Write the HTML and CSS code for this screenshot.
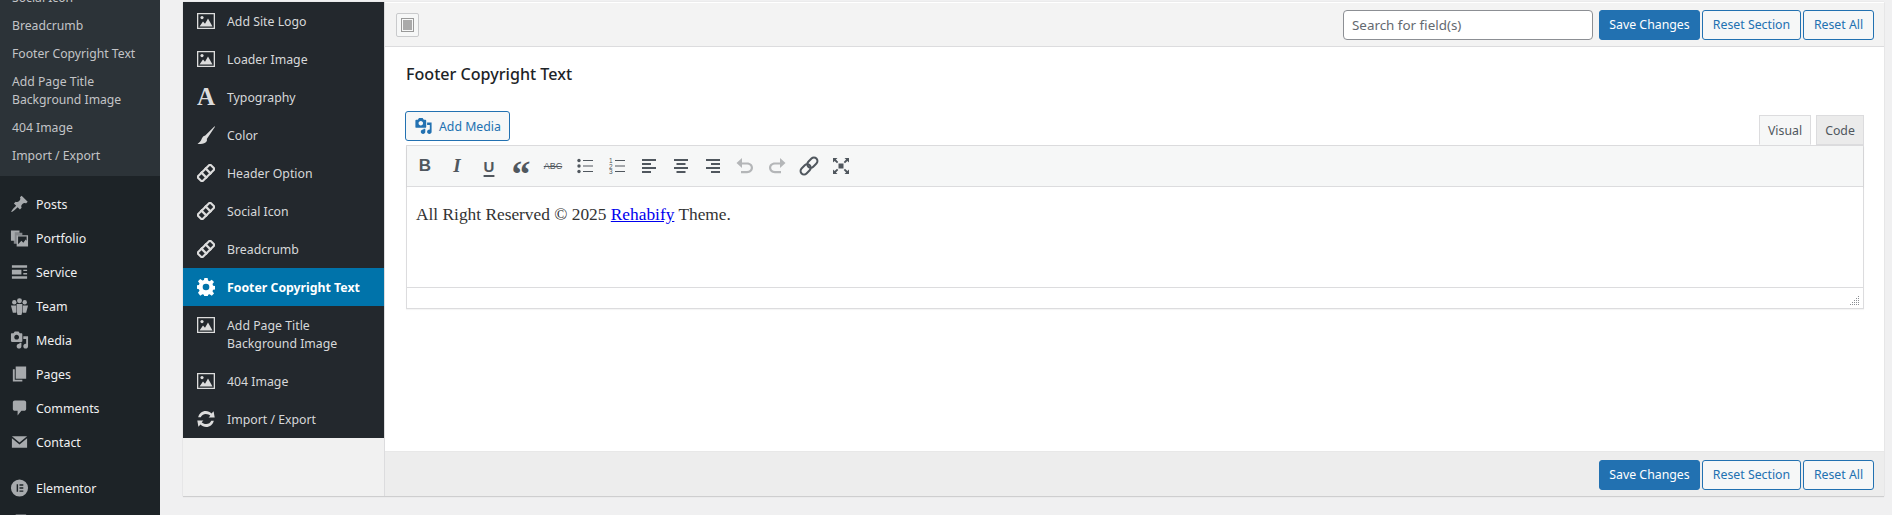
FILE: index.html
```html
<!DOCTYPE html>
<html lang="en">
<head>
<meta charset="utf-8">
<title>Theme Options</title>
<link rel="stylesheet" href="styles.css">
</head>
<body>
<svg class="defs" aria-hidden="true">
  <symbol id="i-pic" viewBox="0 0 18 16"><path fill-rule="evenodd" d="M0 0h18v16H0zM1.300 1.300v13.400h15.400V1.300z"/><path d="M2.500 13.400 6 8.500l2 2.200 3-5.200 4.500 7.900z"/><circle cx="5" cy="4.600" r="1.600"/></symbol>
  <symbol id="i-brush" viewBox="0 0 18 18"><path d="M17.600.2 8 9.800c-.6-.1-1.200 0-1.800.6C4.300 12.200 5 14.600.5 18c3.800.3 7.700-.5 9-2.600.6-.9.6-1.600.3-2.500L18 .7z"/></symbol>
  <symbol id="i-chain" viewBox="0 0 20 20"><g transform="rotate(-45 10 10)" fill="none" stroke="currentColor"><rect x="0" y="6.300" width="20" height="7.400" rx="1.500" stroke-width="2.400"/><path d="M6.700 5v10M13.300 5v10" stroke-width="2.600"/></g></symbol>
  <symbol id="i-cog" viewBox="0 0 20 20"><path fill-rule="evenodd" d="M8.200 0h3.600l.5 2.900 1.700.7 2.400-1.700 2.500 2.500-1.700 2.400.7 1.700 2.900.5v3.600l-2.900.5-.7 1.700 1.700 2.400-2.500 2.500-2.400-1.700-1.700.7-.5 2.900H8.200l-.5-2.900-1.700-.7-2.400 1.700L1.100 16.500l1.700-2.400-.7-1.700L-.8 11.800V8.200l2.900-.5.7-1.700L1.100 3.600 3.600 1.100 6 2.800l1.700-.7zM10 6.300a3.700 3.700 0 1 0 0 7.400 3.700 3.700 0 0 0 0-7.400z"/></symbol>
  <symbol id="i-sync" viewBox="0 0 18 18"><path d="M1.200 7.200C1.900 3.500 5 .9 8.800.9c2.300 0 4.300 1 5.700 2.500L16.600 1.300 17.700 7.400h-6.100l1.700-1.700c-1-1.100-2.500-1.800-4.500-1.800-2.400 0-4.300 1.300-5 3.300zM16.800 10.800c-.7 3.700-3.800 6.300-7.600 6.300-2.300 0-4.300-1-5.700-2.500L1.400 16.700.3 10.600h6.100l-1.700 1.700c1 1.100 2.500 1.800 4.500 1.800 2.400 0 4.300-1.300 5-3.300z"/></symbol>
  <symbol id="i-pin" viewBox="0 0 20 20"><path d="M10.440 3.020l1.820-1.820 6.360 6.350-1.830 1.820c-1.050-.68-2.480-.57-3.410.36l-.75.75c-.92.93-1.040 2.350-.35 3.410l-1.830 1.820-2.410-2.410-2.800 2.790c-.42.42-3.380 2.710-3.800 2.290s1.860-3.390 2.280-3.810l2.790-2.790L4.100 9.360l1.830-1.820c1.050.69 2.480.57 3.400-.36l.75-.75c.93-.92 1.050-2.350.36-3.410z"/></symbol>
  <symbol id="i-portfolio" viewBox="0 0 20 20"><path d="M1 2h9v2.500H5V13H1z"/><path d="M4 4.500h9V7H8v9H4z" opacity=".75"/><path fill-rule="evenodd" d="M7 7h12v12H7zm1.500 1.500v8l3.500-3.500 2 2 2.500-3.500 1 1.500V8.500z"/></symbol>
  <symbol id="i-service" viewBox="0 0 20 20"><path d="M2 3h16v2.500H2zM2 7.500h10v5H2zM14 7.500h4v1.500h-4zM14 11h4v1.500h-4zM2 14.500h16V17H2z"/></symbol>
  <symbol id="i-team" viewBox="0 0 20 20"><circle cx="4.500" cy="6" r="2.300"/><circle cx="15.500" cy="6" r="2.300"/><circle cx="10" cy="4.500" r="2.600"/><path d="M1 9.500h5.500v7.500H3zM13.500 9.500H19L17 17h-3.500z"/><path d="M7 8h6v8l-1 3.500H8L7 16z"/></symbol>
  <symbol id="i-media" viewBox="0 0 20 20"><path d="M13 11V4c0-.55-.45-1-1-1h-1.670L9 1H5L3.670 3H2c-.55 0-1 .45-1 1v7c0 .55.45 1 1 1h10c.55 0 1-.45 1-1zM7 4.500c1.380 0 2.500 1.120 2.500 2.500S8.380 9.500 7 9.500 4.500 8.380 4.500 7 5.620 4.500 7 4.500zM14 6h5v10.500c0 1.380-1.120 2.500-2.500 2.500S14 17.880 14 16.500s1.120-2.500 2.500-2.500c.17 0 .34.02.5.05V9h-3V6zm-4 8.050V13h2v3.500c0 1.380-1.120 2.500-2.500 2.500S7 17.880 7 16.500 8.120 14 9.500 14c.17 0 .34.02.5.05z"/></symbol>
  <symbol id="i-pages" viewBox="0 0 20 20"><path d="M6 15V2h11v13zM5 16h8v2H3V5h2z"/></symbol>
  <symbol id="i-comment" viewBox="0 0 20 20"><path d="M5 2h10c1.100 0 2 .9 2 2v7c0 1.100-.9 2-2 2h-3l-4 5v-5H5c-1.100 0-2-.9-2-2V4c0-1.100.9-2 2-2z"/></symbol>
  <symbol id="i-mail" viewBox="0 0 20 20"><path d="M2 4h16L10 10.500zM2 6l8 6.500L18 6v10H2z"/></symbol>
  <symbol id="i-elementor" viewBox="0 0 20 20"><path fill-rule="evenodd" d="M10 1a9 9 0 1 0 0 18 9 9 0 0 0 0-18zM7 6h1.500v8H7zM10 6h4v1.500h-4zM10 9.250h4v1.500h-4zM10 12.500h4V14h-4z"/></symbol>
  <symbol id="i-undo" viewBox="0 0 20 20"><path d="M7 2 1.500 7 7 12V8.500h5c2.500 0 3.800 1.400 3.800 3.300S14.500 15 12 15H6v2.200h6c3.700 0 6-2.400 6-5.400S15.700 6.400 12 6.400H7z"/></symbol>
  <symbol id="i-link" viewBox="0 0 20 20"><g transform="rotate(-45 10 10)" fill="none" stroke="currentColor" stroke-width="2"><rect x="-.5" y="6.500" width="11.500" height="7" rx="3.500"/><rect x="9" y="6.500" width="11.500" height="7" rx="3.500"/></g></symbol>
  <symbol id="i-full" viewBox="0 0 20 20"><path d="M7.500 7.500h5v5h-5zM2 2h4.500L4.900 3.600l2.400 2.400-1.300 1.300-2.400-2.400L2 6.500zM18 2v4.500l-1.600-1.600-2.400 2.400-1.300-1.300 2.400-2.400L13.500 2zM2 18v-4.500l1.600 1.600 2.400-2.400 1.300 1.300-2.400 2.400L6.500 18zM18 18h-4.500l1.600-1.600-2.400-2.400 1.300-1.300 2.400 2.400 1.600-1.600z"/></symbol>
</svg>

<div class="admin">
  <aside class="adminmenu">
    <ul class="submenu">
      <li>Social Icon</li>
      <li>Breadcrumb</li>
      <li>Footer Copyright Text</li>
      <li>Add Page Title Background Image</li>
      <li>404 Image</li>
      <li>Import / Export</li>
    </ul>
    <ul class="mainmenu">
      <li><svg class="mi"><use href="#i-pin"/></svg>Posts</li>
      <li><svg class="mi"><use href="#i-portfolio"/></svg>Portfolio</li>
      <li><svg class="mi"><use href="#i-service"/></svg>Service</li>
      <li><svg class="mi"><use href="#i-team"/></svg>Team</li>
      <li><svg class="mi"><use href="#i-media"/></svg>Media</li>
      <li><svg class="mi"><use href="#i-pages"/></svg>Pages</li>
      <li><svg class="mi"><use href="#i-comment"/></svg>Comments</li>
      <li><svg class="mi"><use href="#i-mail"/></svg>Contact</li>
      <li class="sep"><svg class="mi"><use href="#i-elementor"/></svg>Elementor</li>
      <li><svg class="mi"><use href="#i-pages"/></svg></li>
    </ul>
  </aside>

  <main class="wrap">
    <div class="panel">
      <nav class="optnav">
        <ul>
          <li><svg class="oi"><use href="#i-pic"/></svg><span>Add Site Logo</span></li>
          <li><svg class="oi"><use href="#i-pic"/></svg><span>Loader Image</span></li>
          <li><b class="oi oi-a">A</b><span>Typography</span></li>
          <li><svg class="oi"><use href="#i-brush"/></svg><span>Color</span></li>
          <li><svg class="oi"><use href="#i-chain"/></svg><span>Header Option</span></li>
          <li><svg class="oi"><use href="#i-chain"/></svg><span>Social Icon</span></li>
          <li><svg class="oi"><use href="#i-chain"/></svg><span>Breadcrumb</span></li>
          <li class="active"><svg class="oi"><use href="#i-cog"/></svg><span>Footer Copyright Text</span></li>
          <li><svg class="oi"><use href="#i-pic"/></svg><span>Add Page Title Background Image</span></li>
          <li><svg class="oi"><use href="#i-pic"/></svg><span>404 Image</span></li>
          <li><svg class="oi"><use href="#i-sync"/></svg><span>Import / Export</span></li>
        </ul>
      </nav>
      <section class="content">
        <header class="bar top">
          <button class="expand" type="button" aria-label="Expand"><span class="expand-in"></span></button>
          <input class="search" type="text" placeholder="Search for field(s)">
          <button class="btn primary" type="button">Save Changes</button>
          <button class="btn section" type="button">Reset Section</button>
          <button class="btn all" type="button">Reset All</button>
        </header>
        <div class="body">
          <h3 class="title">Footer Copyright Text</h3>
          <div class="edtop">
            <button class="btn media" type="button"><svg class="mbi"><use href="#i-media"/></svg>Add Media</button>
            <div class="tabs"><span class="tab on">Visual</span><span class="tab code">Code</span></div>
          </div>
          <div class="editor">
            <div class="toolbar">
              <span class="tb t-b">B</span>
              <span class="tb t-i">I</span>
              <span class="tb t-u">U</span>
              <span class="tb t-q">“</span>
              <span class="tb t-s">ABC</span>
              <span class="tb"><svg class="ti" viewBox="0 0 20 20"><circle cx="4" cy="4.500" r="1.700"/><circle cx="4" cy="10" r="1.700"/><circle cx="4" cy="15.500" r="1.700"/><path d="M8 4h10v1H8zM8 9.500h10v1H8zM8 15h10v1H8z"/></svg></span>
              <span class="tb"><svg class="ti" viewBox="0 0 20 20"><text x="2" y="7" class="num">1</text><text x="2" y="12.500" class="num">2</text><text x="2" y="18" class="num">3</text><path d="M8 4h10v1H8zM8 9.500h10v1H8zM8 15h10v1H8z"/></svg></span>
              <span class="tb"><svg class="ti" viewBox="0 0 20 20"><path d="M3 3h14v2H3zM3 7h9v2H3zM3 11h14v2H3zM3 15h9v2H3z"/></svg></span>
              <span class="tb"><svg class="ti" viewBox="0 0 20 20"><path d="M3 3h14v2H3zM5.500 7h9v2h-9zM3 11h14v2H3zM5.500 15h9v2h-9z"/></svg></span>
              <span class="tb"><svg class="ti" viewBox="0 0 20 20"><path d="M3 3h14v2H3zM8 7h9v2H8zM3 11h14v2H3zM8 15h9v2H8z"/></svg></span>
              <span class="tb dim"><svg class="ti"><use href="#i-undo"/></svg></span>
              <span class="tb dim"><svg class="ti flip"><use href="#i-undo"/></svg></span>
              <span class="tb"><svg class="ti"><use href="#i-link"/></svg></span>
              <span class="tb"><svg class="ti"><use href="#i-full"/></svg></span>
            </div>
            <div class="area"><p>All Right Reserved © 2025 <a href="#">Rehabify</a> Theme.</p></div>
            <div class="status"><svg class="grip" viewBox="0 0 10 10"><path d="M8 0h1v1H8zM6 2h1v1H6zM8 2h1v1H8zM4 4h1v1H4zM6 4h1v1H6zM8 4h1v1H8zM2 6h1v1H2zM4 6h1v1H4zM6 6h1v1H6zM8 6h1v1H8zM0 8h1v1H0zM2 8h1v1H2zM4 8h1v1H4zM6 8h1v1H6zM8 8h1v1H8z"/></svg></div>
          </div>
        </div>
        <footer class="bar bottom">
          <button class="btn primary" type="button">Save Changes</button>
          <button class="btn section" type="button">Reset Section</button>
          <button class="btn all" type="button">Reset All</button>
        </footer>
      </section>
    </div>
  </main>
</div>
</body>
</html>
```
FILE: styles.css
```css
* { box-sizing: border-box; }
html, body { margin: 0; padding: 0; height: 515px; overflow: hidden; }
body { background: #f0f0f1; font-family: "Noto Sans", "Open Sans", sans-serif; font-size: 12.200px; color: #3c434a; }
ul { list-style: none; margin: 0; padding: 0; }
.defs { position: absolute; width: 0; height: 0; }

.admin { display: flex; height: 515px; }

.adminmenu { width: 160px; flex: none; background: #1d2327; height: 515px; overflow: hidden; }
.submenu { background: #2c3338; margin-top: -21px; padding: 5px 0 7px; height: 197px; color: #c3c4c7; }
.submenu li { padding: 5px 24px 5px 12px; line-height: 18px; }
.mainmenu { padding-top: 11px; color: #f0f0f1; font-size: 12.400px; }
.mainmenu li { display: flex; align-items: center; height: 34px; padding-left: 10px; gap: 7px; }
.mainmenu .sep { margin-top: 12px; }
.mi { width: 19px; height: 20px; fill: #a7aaad; flex: none; }

.wrap { flex: 1; padding: 2px 8px 0 23px; min-width: 0; }
.panel { display: flex; height: 494px; background: #f1f1f1; box-shadow: 0 1px 1px rgba(0,0,0,.12), 0 0 1px rgba(0,0,0,.12); }

.optnav { width: 202px; flex: none; border-right: 1px solid #dcdcde; }
.optnav ul { background: #23282d; color: #d7d8da; font-size: 12.300px; width: 201px; }
.optnav li { display: flex; gap: 12px; padding: 10.500px 14px 9.500px; line-height: 18px; }
.oi { width: 18px; height: 18px; flex: none; fill: #dcdcdc; color: #dcdcdc; margin-top: -1px; }
.oi-a { font: bold 25px/18px "Liberation Serif", serif; text-align: center; }
.optnav .active { background: #0073aa; color: #fff; font-weight: 700; }
.optnav .active .oi { fill: #fff; color: #fff; }

.content { flex: 1; min-width: 0; background: #fff; display: flex; flex-direction: column; }
.bar { display: flex; align-items: center; background: #f3f3f3; padding-right: 10px; gap: 2px; }
.bar.top { height: 44px; margin-top: 1px; border-bottom: 1px solid #dcdcde; padding-left: 11px; justify-content: flex-end; }
.bar.bottom { margin-top: auto; height: 45px; background: #ededed; justify-content: flex-end; padding-top: 3px; padding-bottom: 2px; border-top: 1px solid #e8e8e8; }
.expand { width: 23px; height: 24px; margin-right: auto; padding: 4px; background: #f6f7f7; border: 1px solid #c9cacc; border-radius: 2px; }
.expand-in { display: block; width: 100%; height: 100%; background: #aaa; border: 2px solid #f6f7f7; outline: 1px solid #999; outline-offset: -1px; }
.search { width: 250px; height: 30px; margin-right: 4px; padding: 0 8px; font: inherit; font-size: 13.400px; color: #3c434a; background: #fff; border: 1px solid #8c8f94; border-radius: 4px; }
.search::placeholder { color: #646970; opacity: 1; }
.btn { height: 30px; padding: 0; font: inherit; font-size: 12.300px; color: #2271b1; background: #f6f7f7; border: 1px solid #2271b1; border-radius: 3px; white-space: nowrap; }
.btn.primary { width: 101px; background: #2271b1; color: #fff; }
.btn.section { width: 99px; }
.btn.all { width: 71px; }

.body { padding: 0 20px 0 21px; }
.title { margin: 0; height: 64px; padding-top: 16px; font-size: 16.100px; line-height: 22px; font-weight: 500; color: #1d2327; }
.edtop { display: flex; justify-content: space-between; align-items: flex-end; height: 34px; }
.btn.media { align-self: flex-start; display: flex; align-items: center; gap: 6px; margin-left: -1px; width: 105px; padding: 0 8px; }
.mbi { width: 19px; height: 18px; fill: #2271b1; flex: none; }
.tabs { display: flex; gap: 5px; }
.tab { height: 30px; line-height: 29px; font-size: 12.300px; color: #50575e; background: #ebebeb; border: 1px solid #dcdcde; text-align: center; }
.tab.code { width: 48px; }
.tab.on { background: #f6f7f7; border-bottom-color: #f6f7f7; width: 52px; }
.editor { border: 1px solid #dcdcde; height: 164px; display: flex; flex-direction: column; box-shadow: 0 1px 1px rgba(0,0,0,.04); }
.toolbar { display: flex; align-items: center; height: 41px; padding-left: 2px; background: #f6f7f7; border-bottom: 1px solid #dcdcde; box-shadow: 0 1px 2px rgba(0,0,0,.1); flex: none; }
.tb { width: 32px; height: 30px; display: flex; align-items: center; justify-content: center; color: #50575e; fill: #50575e; }
.tb.dim { color: #b4b6b8; fill: #b4b6b8; }
.ti { width: 20px; height: 20px; }
.flip { transform: scaleX(-1); }
.t-b { font: bold 17px "Liberation Sans", sans-serif; }
.t-i { font: italic bold 19px "Liberation Serif", serif; }
.t-u { font: bold 15px "Liberation Sans", sans-serif; text-decoration: underline; text-underline-offset: 3px; text-decoration-thickness: 2px; }
.t-q { font: bold 38px/1 "Liberation Serif", serif; padding-top: 16px; }
.t-s { font: 9px "Liberation Sans", sans-serif; text-decoration: line-through; }
.num { font: 6.500px "Liberation Sans", sans-serif; }
.area { flex: 1; padding: 0 9px; background: #fff; }
.area p { margin: 0; padding-top: 16px; font: 17.350px/24px "Liberation Serif", serif; color: #333; }
.area a { color: #0000ee; }
.status { height: 21px; flex: none; border-top: 1px solid #dcdcde; display: flex; justify-content: flex-end; align-items: flex-end; padding: 0 3px 2px 0; }
.grip { width: 10px; height: 10px; fill: #8c8f94; }
```
